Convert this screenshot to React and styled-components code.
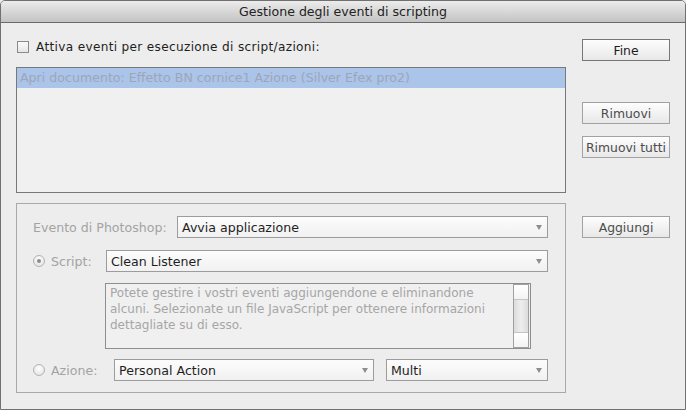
import styled, { createGlobalStyle } from "styled-components";

const GlobalStyle = createGlobalStyle`
  html, body {
    margin:0;
    padding:0;
    background:#ececec;
  }
  body {
    font-family:"DejaVu Sans", "Open Sans", sans-serif;
    font-size:12.6px;
  }
`;

const Window = styled.div`
  width:686px;
  height:410px;
  box-sizing:border-box;
  border:1px solid #707070;
  border-radius:5px 5px 0 0;
  background:#ededed;
  overflow:hidden;
  display:flex;
  flex-direction:column;
`;

const TitleBar = styled.div`
  height:21px;
  flex:none;
  background:linear-gradient(#ececec, #c3c3c3);
  border-bottom:1px solid #6a6a6a;
  display:flex;
  align-items:center;
  justify-content:center;
  font-size:12.6px;
  color:#222;
`;

const Body = styled.div`
  padding:16px 0 0 15px;
  display:flex;
  flex-direction:column;
`;

const Section = styled.div`
  display:flex;
  gap:16px;
  margin-top:${({ $mt }) => $mt || 0}px;
`;

const Main = styled.div`
  width:550px;
  flex:none;
`;

const Side = styled.div`
  width:88px;
  display:flex;
  flex-direction:column;
  gap:12px;
  padding-top:${({ $pt }) => $pt || 0}px;
`;

const Button = styled.button`
  width:88px;
  height:22px;
  box-sizing:border-box;
  padding:0;
  border:1px solid ${({ $default }) => ($default ? "#777" : "#a2a2a2")};
  background:linear-gradient(#fdfdfd, #e8e8e8);
  font-family:inherit;
  font-size:12.4px;
  color:${({ $default }) => ($default ? "#1c1c1c" : "#4c4c4c")};
  white-space:nowrap;
`;

const CheckRow = styled.label`
  display:flex;
  align-items:center;
  gap:7px;
  padding:1px 0 0 1px;
  height:14px;
  font-size:12.1px;
  letter-spacing:0.33px;
  color:#1e1e1e;
`;

const CheckBox = styled.span`
  width:12px;
  height:12px;
  box-sizing:border-box;
  border:1px solid #8a8a8a;
  background:linear-gradient(#fafafa, #e6e6e6);
  flex:none;
`;

const List = styled.div`
  height:126px;
  box-sizing:border-box;
  border:1px solid #787878;
  background:#f0f0f0;
`;

const ListItem = styled.div`
  height:20px;
  line-height:20px;
  padding-left:3px;
  background:${({ $selected }) => ($selected ? "#aac4ea" : "transparent")};
  color:#9ea6b6;
  white-space:nowrap;
`;

const Panel = styled.div`
  height:190px;
  box-sizing:border-box;
  border:1px solid #a9a9a9;
  padding:12px 17px 0 16px;
  display:flex;
  flex-direction:column;
`;

const Row = styled.div`
  display:flex;
  align-items:center;
  margin-top:${({ $mt }) => $mt || 0}px;
`;

const Label = styled.div`
  width:${({ $w }) => $w}px;
  flex:none;
  display:flex;
  align-items:center;
  gap:6px;
  color:#a3a3a3;
  white-space:nowrap;
`;

const Radio = styled.span`
  width:12px;
  height:12px;
  box-sizing:border-box;
  border-radius:50%;
  border:1px solid #b3b3b3;
  background:radial-gradient(circle at 50% 35%, #ffffff, #dedede);
  display:flex;
  align-items:center;
  justify-content:center;
  flex:none;
  &::after {
    content:"";
    width:4px;
    height:4px;
    border-radius:50%;
    background:${({ $checked }) => ($checked ? "#8c8c8c" : "transparent")};
  }
`;

const Select = styled.div`
  height:22px;
  box-sizing:border-box;
  flex:${({ $w }) => ($w ? "none" : "1")};
  width:${({ $w }) => ($w ? `${$w}px` : "auto")};
  border:1px solid #9c9c9c;
  background:linear-gradient(#fcfcfc, #f1f1f1);
  display:flex;
  align-items:center;
  justify-content:space-between;
  padding:0 5px 0 4px;
  color:#1f1f1f;
  white-space:nowrap;
  & + & {
    margin-left:12px;
  }
`;

const Arrow = styled.span`
  width:0;
  height:0;
  border-left:3px solid transparent;
  border-right:3px solid transparent;
  border-top:5px solid #8d8d8d;
`;

const TextBox = styled.div`
  width:426px;
  height:66px;
  box-sizing:border-box;
  margin:11px 0 0 72px;
  border:1px solid #8e8e8e;
  background:#f0f0f0;
  display:flex;
`;

const Help = styled.div`
  flex:1;
  padding:1px 0 0 4px;
  font-size:12px;
  line-height:16px;
  color:#a6a6a6;
  white-space:nowrap;
`;

const ScrollBar = styled.div`
  width:16px;
  box-sizing:border-box;
  margin:0 1px 0 0;
  border:1px solid #a0a0a0;
  display:flex;
  flex-direction:column;
`;

const ScrollBtn = styled.div`
  height:14px;
  background:linear-gradient(#ffffff, #f3f3f3);
  border-${({ $side }) => $side}:1px solid #c4c4c4;
`;

const Track = styled.div`
  flex:1;
  background:linear-gradient(90deg, #dcdcdc, #eeeeee 50%, #dcdcdc);
`;

const Dropdown = ({ children, w }) => (
  <Select $w={w}>
    <span>{children}</span>
    <Arrow />
  </Select>
);

export default function App() {
  return (
    <>
      <GlobalStyle />
      <Window>
        <TitleBar>Gestione degli eventi di scripting</TitleBar>
        <Body>
          <Section>
            <Main>
              <CheckRow>
                <CheckBox />
                Attiva eventi per esecuzione di script/azioni:
              </CheckRow>
            </Main>
            <Side>
              <Button $default>Fine</Button>
            </Side>
          </Section>

          <Section $mt={6}>
            <Main>
              <List>
                <ListItem $selected>
                  Apri documento: Effetto BN cornice1 Azione (Silver Efex pro2)
                </ListItem>
              </List>
            </Main>
            <Side $pt={35}>
              <Button>Rimuovi</Button>
              <Button>Rimuovi tutti</Button>
            </Side>
          </Section>

          <Section $mt={10}>
            <Main>
              <Panel>
                <Row>
                  <Label $w={144}>Evento di Photoshop:</Label>
                  <Dropdown>Avvia applicazione</Dropdown>
                </Row>
                <Row $mt={12}>
                  <Label $w={73}>
                    <Radio $checked />
                    Script:
                  </Label>
                  <Dropdown>Clean Listener</Dropdown>
                </Row>
                <TextBox>
                  <Help>
                    Potete gestire i vostri eventi aggiungendone e eliminandone
                    <br />
                    alcuni. Selezionate un file JavaScript per ottenere informazioni
                    <br />
                    dettagliate su di esso.
                  </Help>
                  <ScrollBar>
                    <ScrollBtn $side="bottom" />
                    <Track />
                    <ScrollBtn $side="top" />
                  </ScrollBar>
                </TextBox>
                <Row $mt={10}>
                  <Label $w={81}>
                    <Radio />
                    Azione:
                  </Label>
                  <Dropdown w={260}>Personal Action</Dropdown>
                  <Dropdown>Multi</Dropdown>
                </Row>
              </Panel>
            </Main>
            <Side $pt={13}>
              <Button>Aggiungi</Button>
            </Side>
          </Section>
        </Body>
      </Window>
    </>
  );
}
